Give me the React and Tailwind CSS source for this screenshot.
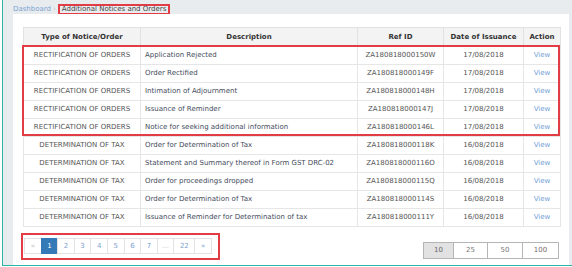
import React from "react";

const rows = [
  ["RECTIFICATION OF ORDERS", "Application Rejected", "ZA180818000150W", "17/08/2018"],
  ["RECTIFICATION OF ORDERS", "Order Rectified", "ZA180818000149F", "17/08/2018"],
  ["RECTIFICATION OF ORDERS", "Intimation of Adjournment", "ZA180818000148H", "17/08/2018"],
  ["RECTIFICATION OF ORDERS", "Issuance of Reminder", "ZA180818000147J", "17/08/2018"],
  ["RECTIFICATION OF ORDERS", "Notice for seeking additional information", "ZA180818000146L", "17/08/2018"],
  ["DETERMINATION OF TAX", "Order for Determination of Tax", "ZA180818000118K", "16/08/2018"],
  ["DETERMINATION OF TAX", "Statement and Summary thereof in Form GST DRC-02", "ZA180818000116O", "16/08/2018"],
  ["DETERMINATION OF TAX", "Order for proceedings dropped", "ZA180818000115Q", "16/08/2018"],
  ["DETERMINATION OF TAX", "Order for Determination of Tax", "ZA180818000114S", "16/08/2018"],
  ["DETERMINATION OF TAX", "Issuance of Reminder for Determination of tax", "ZA180818000111Y", "16/08/2018"],
];

const pages = ["2", "3", "4", "5", "6", "7"];

export default function App() {
  return (
    <div className="w-[572px] h-[267px] bg-white overflow-hidden font-['DejaVu_Sans',sans-serif] text-[7px] leading-none">
      <div className="ml-[2px] h-[266px] border-l border-b border-[#2ab5a7] bg-[#e9ecef] flex flex-col">
        <div className="h-[14px] shrink-0 pl-[10px] pt-[4px] flex items-start">
          <span className="text-[#7ba2cf] mt-[2px]">Dashboard</span>
          <span className="text-[#c4c8cc] mx-[2px] mt-[2px]">›</span>
          <span className="h-[11px] border-2 border-[#e23c44] px-[2px] flex items-center text-[#444]">
            Additional Notices and Orders
          </span>
        </div>
        <div className="flex-1 ml-[10px] mr-[3px] bg-white pl-[10px] pr-[9px] pt-[13px]">
          <div className="relative">
            <table className="w-[537px] table-fixed border-collapse">
              <colgroup>
                <col className="w-[117px]" />
                <col className="w-[217px]" />
                <col className="w-[86px]" />
                <col className="w-[80px]" />
                <col className="w-[37px]" />
              </colgroup>
              <thead>
                <tr className="bg-[#f3f3f3] h-[19px]">
                  {["Type of Notice/Order", "Description", "Ref ID", "Date of Issuance", "Action"].map((h) => (
                    <th key={h} className="border border-[#e2e2e2] p-0 font-bold text-[#333] text-center">
                      {h}
                    </th>
                  ))}
                </tr>
              </thead>
              <tbody>
                {rows.map((r, i) => (
                  <tr key={i} className="h-[18px]">
                    <td className="border border-[#e6e6e6] p-0 text-center text-[#555] whitespace-nowrap">{r[0]}</td>
                    <td className="border border-[#e6e6e6] p-0 pl-[4px] text-[#454c5c] whitespace-nowrap overflow-hidden">{r[1]}</td>
                    <td className="border border-[#e6e6e6] p-0 text-center text-[#555]">{r[2]}</td>
                    <td className="border border-[#e6e6e6] p-0 text-center text-[#555]">{r[3]}</td>
                    <td className="border border-[#e6e6e6] p-0 text-center text-[#72a0d6]">View</td>
                  </tr>
                ))}
              </tbody>
            </table>
            <div className="absolute left-[-1px] top-[18px] w-[538px] h-[91px] border-2 border-[#e23c44] pointer-events-none" />
          </div>
          <div className="flex items-start justify-between">
            <div className="-ml-[2px] mt-[6px] border-2 border-[#e23c44] pl-[1px] pr-[6px] pt-[3px] pb-[4px] flex">
              <span className="w-[17.6px] h-[16px] border border-[#e3e3e3] flex items-center justify-center text-[#c0c0c0]">«</span>
              <span className="w-[17.6px] h-[16px] -ml-px border border-[#337ab7] bg-[#337ab7] flex items-center justify-center text-white">1</span>
              {pages.map((p) => (
                <span key={p} className="w-[17.6px] h-[16px] -ml-px border border-[#e3e3e3] flex items-center justify-center text-[#7ba2cf]">
                  {p}
                </span>
              ))}
              <span className="w-[17.6px] h-[16px] -ml-px border border-[#e3e3e3] flex items-center justify-center text-[#bbb]">…</span>
              <span className="w-[22px] h-[16px] -ml-px border border-[#e3e3e3] flex items-center justify-center text-[#7ba2cf]">22</span>
              <span className="w-[17.6px] h-[16px] -ml-px border border-[#e3e3e3] flex items-center justify-center text-[#7ba2cf]">»</span>
            </div>
            <div className="mt-[15px] mr-[1px] flex h-[17px]">
              <span className="w-[31px] border border-[#b5b5b5] bg-[#e2e2e2] flex items-center justify-center text-[#666]">10</span>
              <span className="w-[35px] -ml-px border border-[#b5b5b5] flex items-center justify-center text-[#777]">25</span>
              <span className="w-[36px] -ml-px border border-[#b5b5b5] flex items-center justify-center text-[#777]">50</span>
              <span className="w-[37px] -ml-px border border-[#b5b5b5] flex items-center justify-center text-[#7a6a70]">100</span>
            </div>
          </div>
        </div>
      </div>
    </div>
  );
}
